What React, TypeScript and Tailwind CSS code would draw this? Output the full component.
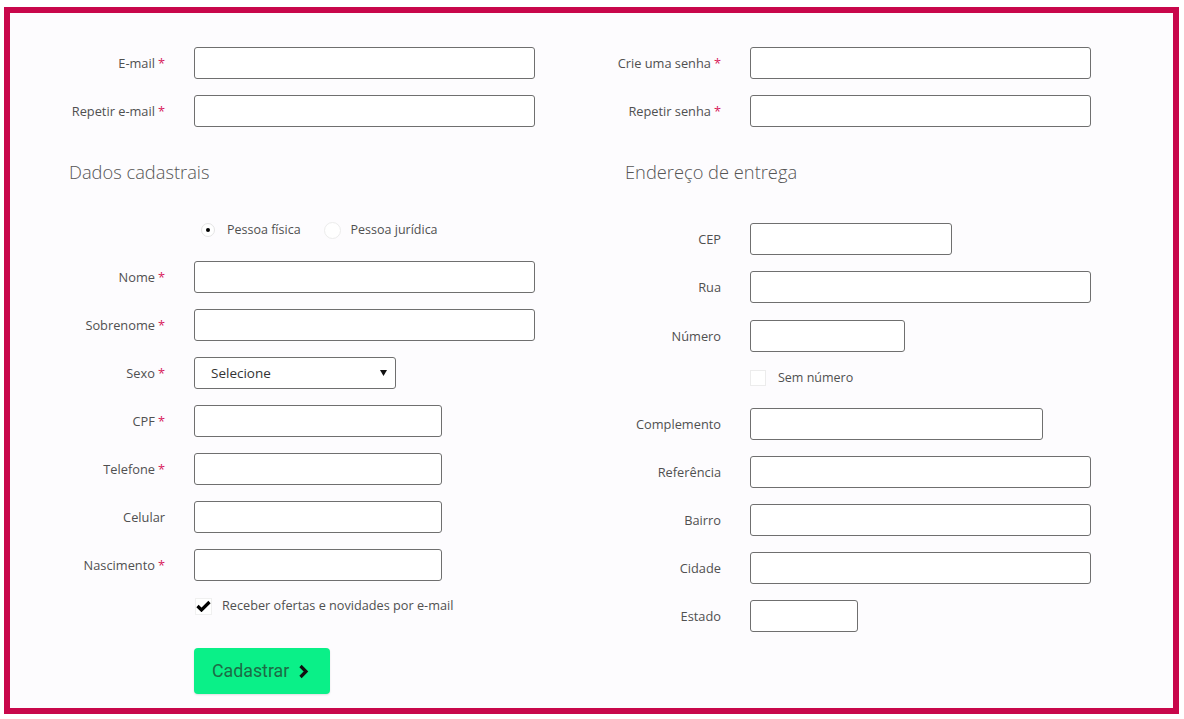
import React from "react";

const font = { fontFamily: '"Open Sans", "DejaVu Sans", sans-serif' };

function Req() {
  return <span className="text-[#d81b5c] ml-[3px]">*</span>;
}

function Row({ label, req, width, mt = "mt-4" }: { label: string; req?: boolean; width: string; mt?: string }) {
  return (
    <div className={`flex items-center ${mt}`}>
      <div className="w-[105px] text-right text-[12.8px] text-[#505050] leading-none shrink-0 whitespace-nowrap">
        {label}
        {req && <Req />}
      </div>
      <div className={`ml-[29px] h-8 ${width} border border-[#6f6f6f] rounded-[3px] bg-white`} />
    </div>
  );
}

export default function App() {
  return (
    <div className="w-[1184px] h-[719px] bg-white pl-[4px] pt-[7px] pr-[5px] pb-[5px]" style={font}>
      <div className="w-full h-full border-[6px] border-[#c8074b] bg-[#fdfcfe] flex pl-[50px] pt-[34px]">
        {/* Left column */}
        <div className="w-[556px] flex flex-col">
          <Row label="E-mail" req width="w-[341px]" mt="mt-0" />
          <Row label="Repetir e-mail" req width="w-[341px]" />
          <div className="ml-[9px] mt-[35px] h-5 text-[18.3px] font-light leading-5 text-[#555] whitespace-nowrap">Dados cadastrais</div>
          <div className="mt-[40px] h-4 flex items-center text-[12.5px] text-[#505050] ml-[141px] whitespace-nowrap">
            <div className="w-[14px] h-[14px] rounded-full border border-[#e4e4e4] bg-white flex items-center justify-center">
              <div className="w-[4px] h-[4px] rounded-full bg-black" />
            </div>
            <span className="ml-[12px]">Pessoa física</span>
            <div className="ml-[23px] w-[17px] h-[17px] rounded-full border border-[#ececec] bg-white" />
            <span className="ml-[10px]">Pessoa jurídica</span>
          </div>
          <Row label="Nome" req width="w-[341px]" mt="mt-[23px]" />
          <Row label="Sobrenome" req width="w-[341px]" />
          <div className="flex items-center mt-4">
            <div className="w-[105px] text-right text-[12.8px] text-[#505050] leading-none shrink-0">
              Sexo
              <Req />
            </div>
            <div className="ml-[29px] h-8 w-[202px] border border-[#6f6f6f] rounded-[3px] bg-white flex items-center justify-between pl-[16px] pr-[8px]">
              <span className="text-[13.5px] text-[#333]">Selecione</span>
              <svg width="7" height="6" viewBox="0 0 7 6">
                <path d="M0 0 H7 L3.5 6 Z" fill="#111" />
              </svg>
            </div>
          </div>
          <Row label="CPF" req width="w-[248px]" />
          <Row label="Telefone" req width="w-[248px]" />
          <Row label="Celular" width="w-[248px]" />
          <Row label="Nascimento" req width="w-[248px]" />
          <div className="mt-[17px] h-4 flex items-center ml-[135px] text-[12.7px] text-[#505050] whitespace-nowrap">
            <div className="w-[17px] h-[17px] border border-[#f0f0f0] bg-white flex items-center justify-center">
              <svg width="15" height="12" viewBox="0 0 15 12">
                <path d="M1.5 6 L5.5 10 L13.5 2" stroke="#000" strokeWidth="3.2" fill="none" strokeLinejoin="miter" />
              </svg>
            </div>
            <span className="ml-[10px]">Receber ofertas e novidades por e-mail</span>
          </div>
          <button
            className="mt-[34px] ml-[134px] w-[136px] h-[46px] rounded-[4px] bg-[#0af088] shadow-[0_1px_2px_rgba(0,0,0,0.12)] flex items-center pl-[18px] text-[17.8px] text-[#1d6b45]"
            style={{ fontFamily: 'Roboto, "Open Sans", sans-serif' }}
          >
            Cadastrar
            <svg className="ml-[9px]" width="11" height="15" viewBox="0 0 11 15">
              <path d="M2.5 2 L8 7.5 L2.5 13" stroke="#111" strokeWidth="3.2" fill="none" />
            </svg>
          </button>
        </div>
        {/* Right column */}
        <div className="w-[556px] flex flex-col">
          <Row label="Crie uma senha" req width="w-[341px]" mt="mt-0" />
          <Row label="Repetir senha" req width="w-[341px]" />
          <div className="ml-[9px] mt-[35px] h-5 text-[18.3px] font-light leading-5 text-[#555] whitespace-nowrap">Endereço de entrega</div>
          <Row label="CEP" width="w-[202px]" mt="mt-[41px]" />
          <Row label="Rua" width="w-[341px]" />
          <Row label="Número" width="w-[155px]" mt="mt-[17px]" />
          <div className="mt-[18px] h-4 flex items-center ml-[134px] text-[12.5px] text-[#505050] whitespace-nowrap">
            <div className="w-[16px] h-[16px] border border-[#ececec] bg-white" />
            <span className="ml-[12px]">Sem número</span>
          </div>
          <Row label="Complemento" width="w-[293px]" mt="mt-[22px]" />
          <Row label="Referência" width="w-[341px]" />
          <Row label="Bairro" width="w-[341px]" />
          <Row label="Cidade" width="w-[341px]" />
          <Row label="Estado" width="w-[108px]" />
        </div>
      </div>
    </div>
  );
}
